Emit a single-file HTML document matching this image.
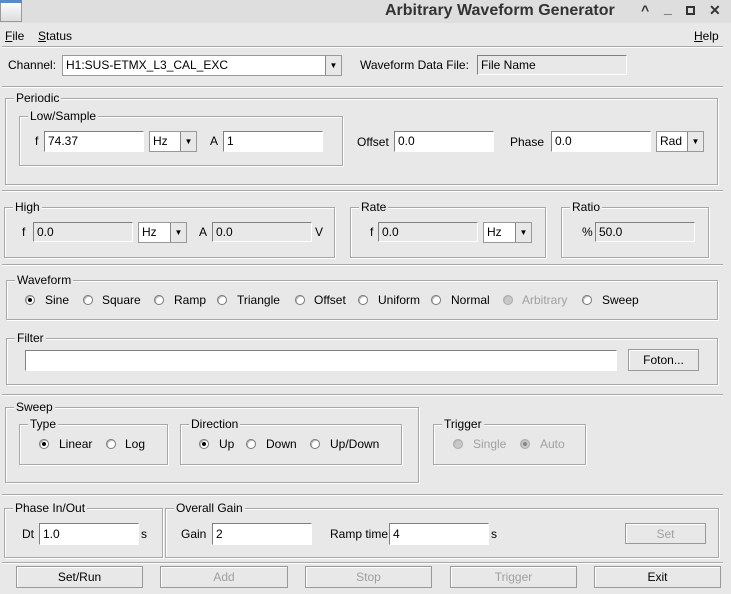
<!DOCTYPE html><html><head><style>
*{box-sizing:border-box;margin:0;padding:0}
body{width:731px;height:594px;background:#e8e8e8;font-family:"Liberation Sans",sans-serif;font-size:12px;color:#000;position:relative;overflow:hidden}
div,span{position:absolute}
.t{white-space:nowrap;line-height:14px}
.fr{border:1px solid #a8a8a8;box-shadow:inset 1px 1px 0 #fff,1px 1px 0 #fff}
.lg{background:#e8e8e8;padding:0 2px;line-height:14px;top:-8px;left:8px}
.sep{border-top:1px solid #a8a8a8;border-bottom:1px solid #fff;height:2px}
.f{background:#fff;border-top:1px solid #808080;border-left:1px solid #808080;border-right:1px solid #fff;border-bottom:1px solid #fff;padding-left:3px;line-height:19px}
.g{background:#e8e8e8}
.cb{background:#fff;border:1px solid #999;padding-left:3px;line-height:19px}
.ar{right:0;top:0;bottom:0;width:16px;border-left:1px solid #888;background:#e8e8e8;font-size:8px;text-align:center;line-height:19px}
.bt{border:1px solid #999;box-shadow:inset 1px 1px 0 #fff;text-align:center;line-height:20px}
.dis{color:#a0a0a0}
.r{width:10px;height:10px;border-radius:50%;border:1px solid #777;background:#fff;box-shadow:inset 1px 1px 0 #bbb}
.r.on::after{content:"";position:absolute;left:2px;top:2px;width:4px;height:4px;border-radius:50%;background:#000}
.r.d{background:#c8c8c8;border-color:#aaa}
.r.d.on::after{background:#888}
</style></head><body>
<div style="left:0;top:0;width:731px;height:23px;background:#dedede"></div>
<div style="left:0;top:0;width:22px;height:22px;border:1px solid #999;background:linear-gradient(#fff,#ddd)"></div>
<div style="left:0;top:0;width:22px;height:3px;background:#5a8ac8"></div>
<div class="t" style="left:385px;top:2px;font-size:16px;font-weight:bold;color:#333;line-height:18px">Arbitrary Waveform Generator</div>
<div class="t" style="left:641px;top:3px;font-size:14px;font-weight:bold;color:#333">^</div>
<div class="t" style="left:664px;top:1px;font-size:14px;font-weight:bold;color:#333">_</div>
<div style="left:686px;top:6px;width:9px;height:9px;border:2px solid #333"></div>
<div class="t" style="left:709px;top:3px;font-size:14px;font-weight:bold;color:#333">✕</div>

<div class="t" style="left:5px;top:29px"><u>F</u>ile</div>
<div class="t" style="left:38px;top:29px"><u>S</u>tatus</div>
<div class="t" style="left:694px;top:29px"><u>H</u>elp</div>
<div class="sep" style="left:2px;top:46px;width:721px"></div>

<div class="t" style="left:8px;top:58px">Channel:</div>
<div class="cb" style="left:62px;top:55px;width:280px;height:21px">H1:SUS-ETMX_L3_CAL_EXC<div class="ar">▼</div></div>
<div class="t" style="left:360px;top:58px">Waveform Data File:</div>
<div class="f g" style="left:477px;top:55px;width:150px;height:20px">File Name</div>
<div class="sep" style="left:2px;top:86px;width:721px"></div>

<div class="fr" style="left:5px;top:98px;width:713px;height:87px"><div class="lg">Periodic</div></div>
<div class="fr" style="left:19px;top:116px;width:324px;height:50px"><div class="lg">Low/Sample</div></div>
<div class="t" style="left:35px;top:134px">f</div>
<div class="f" style="left:44px;top:131px;width:100px;height:21px">74.37</div>
<div class="cb" style="left:149px;top:131px;width:48px;height:21px">Hz<div class="ar">▼</div></div>
<div class="t" style="left:210px;top:134px">A</div>
<div class="f" style="left:223px;top:131px;width:100px;height:21px">1</div>
<div class="t" style="left:357px;top:135px">Offset</div>
<div class="f" style="left:394px;top:131px;width:100px;height:21px">0.0</div>
<div class="t" style="left:510px;top:135px">Phase</div>
<div class="f" style="left:551px;top:131px;width:100px;height:21px">0.0</div>
<div class="cb" style="left:656px;top:131px;width:48px;height:21px">Rad<div class="ar">▼</div></div>
<div class="sep" style="left:2px;top:190px;width:721px"></div>

<div class="fr" style="left:4px;top:207px;width:331px;height:51px"><div class="lg">High</div></div>
<div class="t" style="left:22px;top:225px">f</div>
<div class="f g" style="left:33px;top:222px;width:100px;height:20px">0.0</div>
<div class="cb" style="left:138px;top:222px;width:49px;height:21px">Hz<div class="ar">▼</div></div>
<div class="t" style="left:199px;top:225px">A</div>
<div class="f g" style="left:212px;top:222px;width:100px;height:20px">0.0</div>
<div class="t" style="left:315px;top:225px">V</div>
<div class="fr" style="left:350px;top:207px;width:196px;height:51px"><div class="lg">Rate</div></div>
<div class="t" style="left:370px;top:225px">f</div>
<div class="f g" style="left:378px;top:222px;width:100px;height:20px">0.0</div>
<div class="cb" style="left:483px;top:222px;width:49px;height:21px">Hz<div class="ar">▼</div></div>
<div class="fr" style="left:561px;top:207px;width:148px;height:51px"><div class="lg">Ratio</div></div>
<div class="t" style="left:582px;top:225px">%</div>
<div class="f g" style="left:595px;top:222px;width:100px;height:20px">50.0</div>
<div class="sep" style="left:2px;top:264px;width:721px"></div>

<div class="fr" style="left:6px;top:280px;width:712px;height:40px"><div class="lg">Waveform</div></div>
<div class="r on" style="left:25px;top:295px"></div><div class="t" style="left:45px;top:293px">Sine</div>
<div class="r" style="left:83px;top:295px"></div><div class="t" style="left:102px;top:293px">Square</div>
<div class="r" style="left:154px;top:295px"></div><div class="t" style="left:174px;top:293px">Ramp</div>
<div class="r" style="left:217px;top:295px"></div><div class="t" style="left:237px;top:293px">Triangle</div>
<div class="r" style="left:295px;top:295px"></div><div class="t" style="left:314px;top:293px">Offset</div>
<div class="r" style="left:358px;top:295px"></div><div class="t" style="left:378px;top:293px">Uniform</div>
<div class="r" style="left:431px;top:295px"></div><div class="t" style="left:451px;top:293px">Normal</div>
<div class="r d" style="left:503px;top:295px"></div><div class="t dis" style="left:522px;top:293px">Arbitrary</div>
<div class="r" style="left:582px;top:295px"></div><div class="t" style="left:602px;top:293px">Sweep</div>
<div class="fr" style="left:6px;top:338px;width:712px;height:47px"><div class="lg">Filter</div></div>
<div class="f" style="left:25px;top:350px;width:592px;height:21px"></div>
<div class="bt" style="left:628px;top:349px;width:71px;height:22px">Foton...</div>
<div class="sep" style="left:2px;top:394px;width:721px"></div>

<div class="fr" style="left:5px;top:407px;width:414px;height:76px"><div class="lg">Sweep</div></div>
<div class="fr" style="left:19px;top:424px;width:149px;height:41px"><div class="lg">Type</div></div>
<div class="r on" style="left:39px;top:439px"></div><div class="t" style="left:59px;top:437px">Linear</div>
<div class="r" style="left:106px;top:439px"></div><div class="t" style="left:125px;top:437px">Log</div>
<div class="fr" style="left:180px;top:424px;width:222px;height:41px"><div class="lg">Direction</div></div>
<div class="r on" style="left:199px;top:439px"></div><div class="t" style="left:219px;top:437px">Up</div>
<div class="r" style="left:246px;top:439px"></div><div class="t" style="left:266px;top:437px">Down</div>
<div class="r" style="left:310px;top:439px"></div><div class="t" style="left:330px;top:437px">Up/Down</div>
<div class="fr" style="left:433px;top:424px;width:153px;height:41px"><div class="lg">Trigger</div></div>
<div class="r d" style="left:453px;top:439px"></div><div class="t dis" style="left:473px;top:437px">Single</div>
<div class="r d on" style="left:520px;top:439px"></div><div class="t dis" style="left:540px;top:437px">Auto</div>
<div class="sep" style="left:2px;top:494px;width:721px"></div>

<div class="fr" style="left:4px;top:508px;width:159px;height:50px"><div class="lg">Phase In/Out</div></div>
<div class="t" style="left:22px;top:527px">Dt</div>
<div class="f" style="left:39px;top:523px;width:100px;height:22px;line-height:20px">1.0</div>
<div class="t" style="left:141px;top:527px">s</div>
<div class="fr" style="left:165px;top:508px;width:554px;height:50px"><div class="lg">Overall Gain</div></div>
<div class="t" style="left:181px;top:527px">Gain</div>
<div class="f" style="left:212px;top:523px;width:100px;height:22px;line-height:20px">2</div>
<div class="t" style="left:330px;top:527px">Ramp time</div>
<div class="f" style="left:389px;top:523px;width:100px;height:22px;line-height:20px">4</div>
<div class="t" style="left:491px;top:527px">s</div>
<div class="bt dis" style="left:625px;top:523px;width:81px;height:21px">Set</div>
<div class="sep" style="left:2px;top:562px;width:721px"></div>

<div class="bt" style="left:16px;top:566px;width:127px;height:22px">Set/Run</div>
<div class="bt dis" style="left:160px;top:566px;width:128px;height:22px">Add</div>
<div class="bt dis" style="left:305px;top:566px;width:127px;height:22px">Stop</div>
<div class="bt dis" style="left:450px;top:566px;width:127px;height:22px">Trigger</div>
<div class="bt" style="left:594px;top:566px;width:127px;height:22px">Exit</div>
</body></html>
